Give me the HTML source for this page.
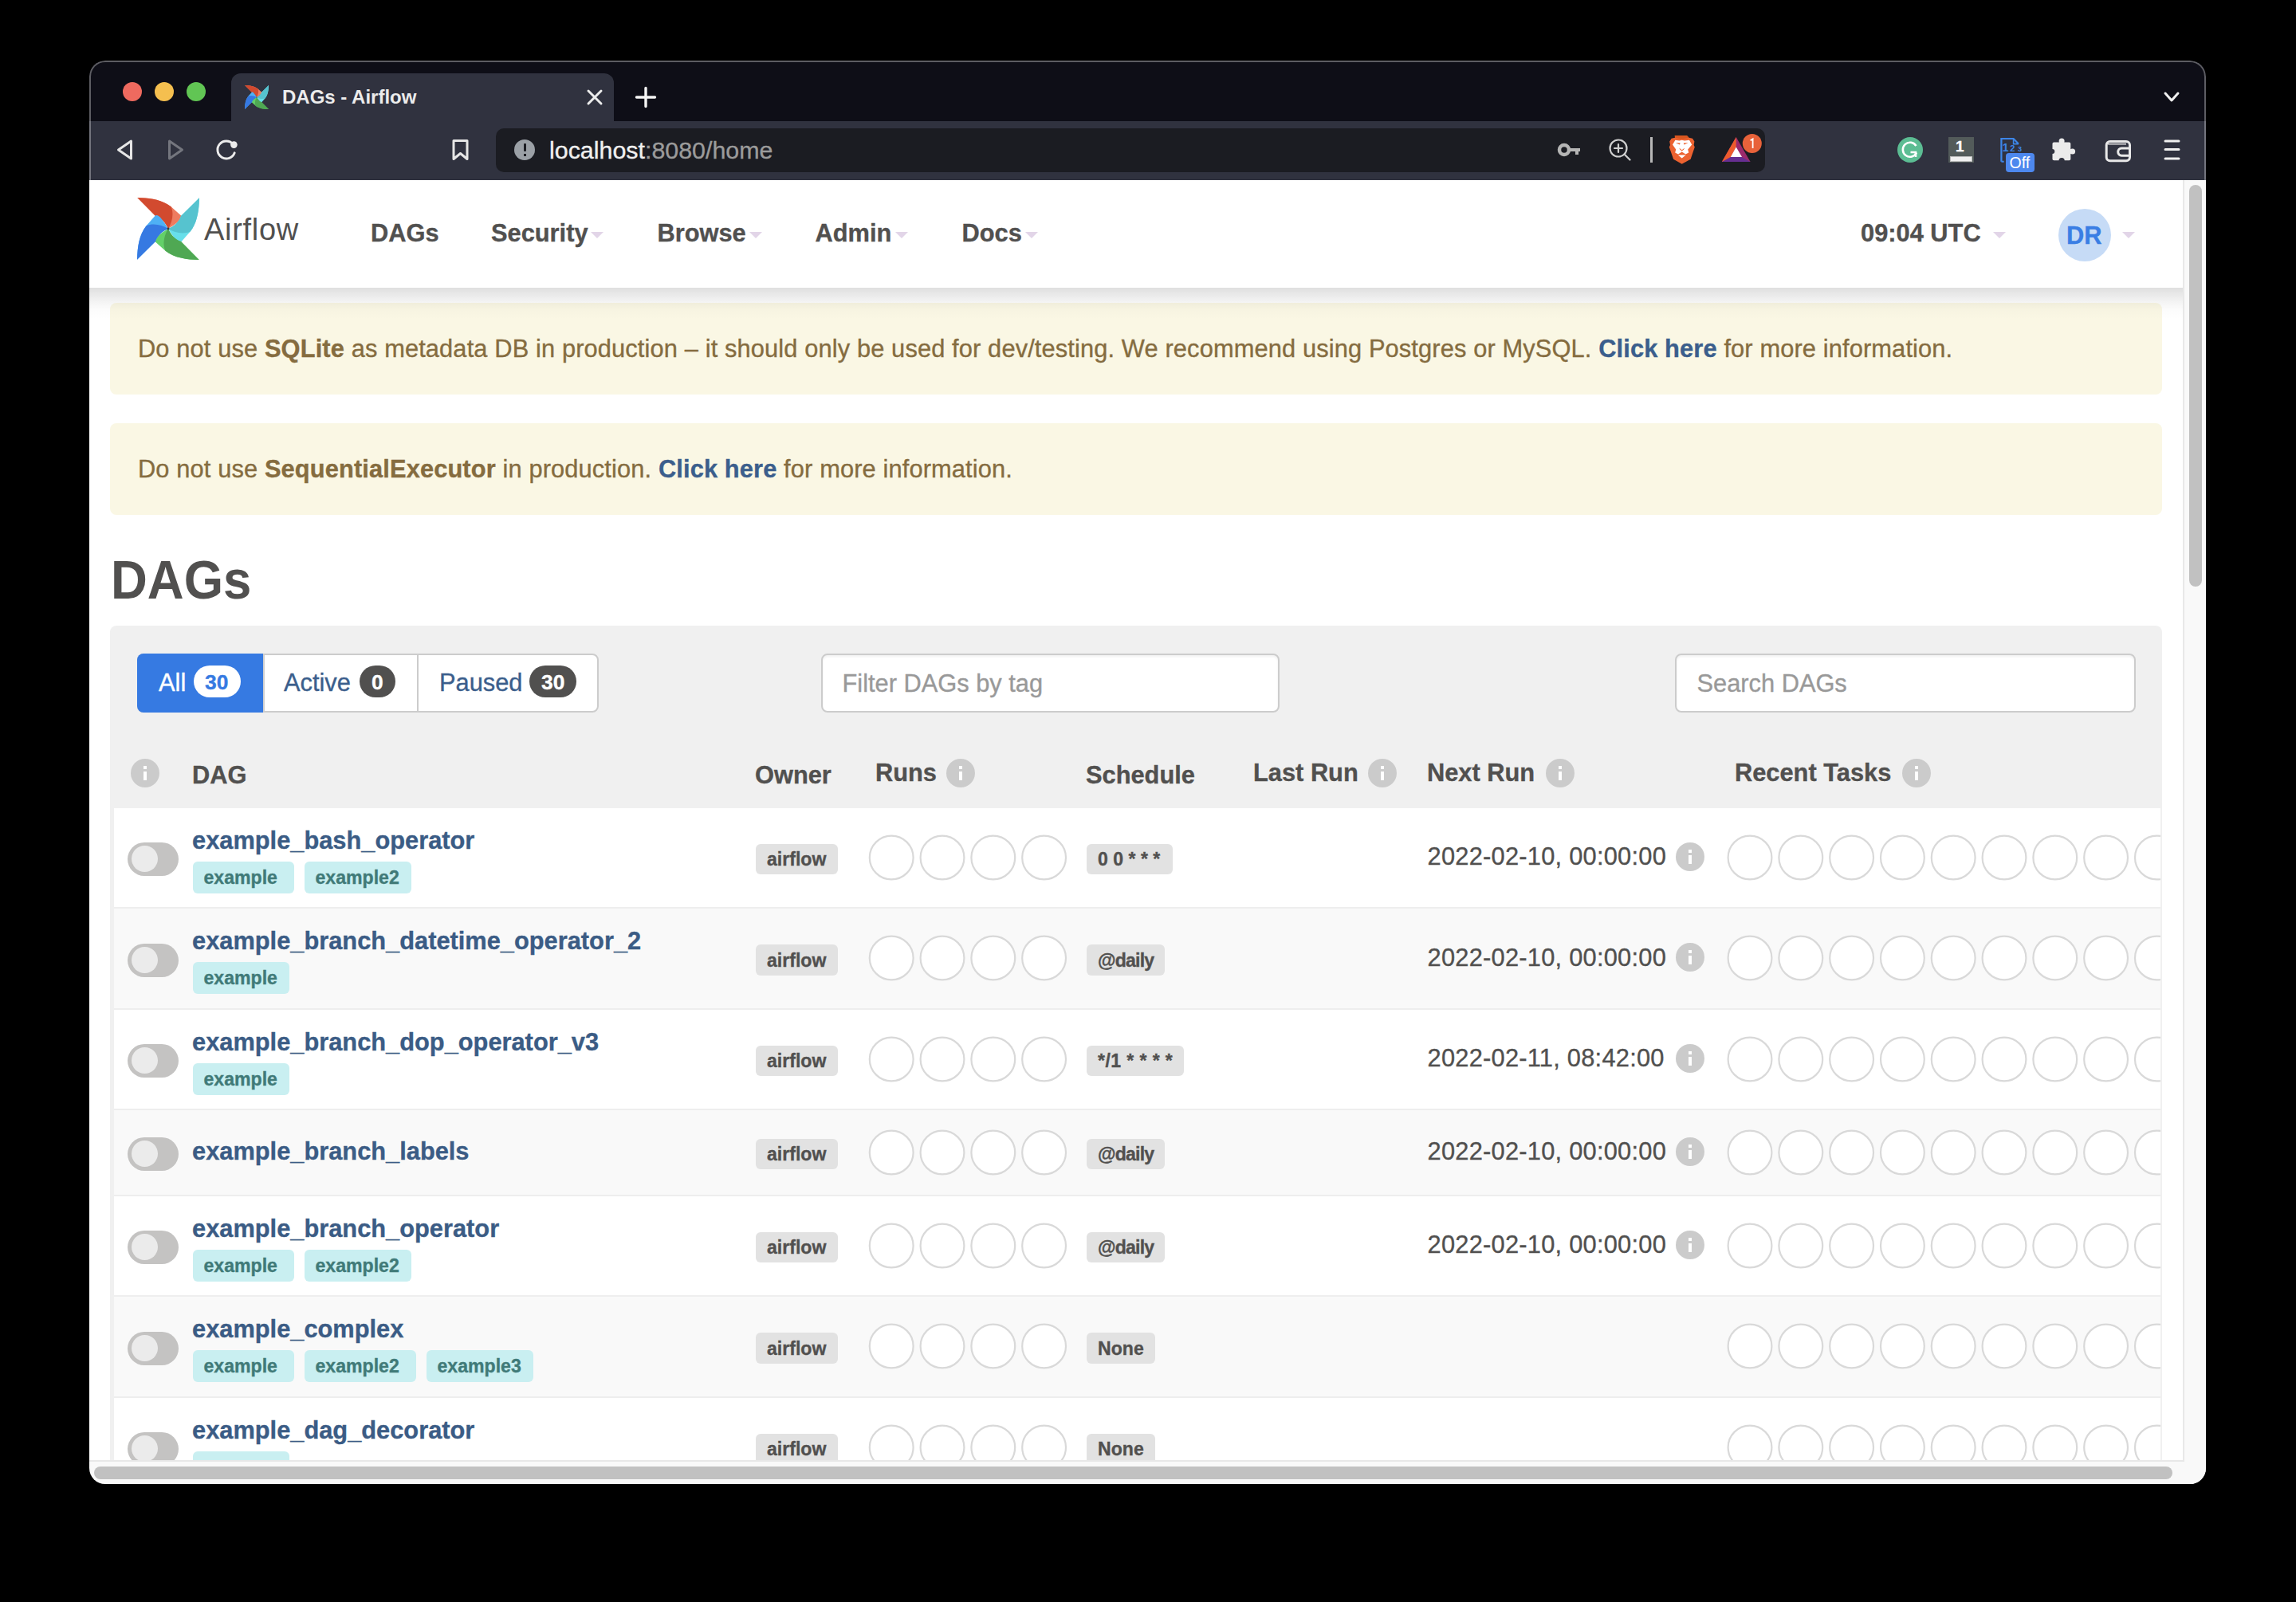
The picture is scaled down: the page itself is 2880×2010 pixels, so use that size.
<!DOCTYPE html>
<html><head><meta charset="utf-8">
<style>
html,body{margin:0;padding:0;width:2880px;height:2010px;overflow:hidden;background:#000;}
*{box-sizing:border-box;}
body{font-family:"Liberation Sans",sans-serif;position:relative;}
.a{position:absolute;}
.t{position:absolute;line-height:1;white-space:nowrap;-webkit-text-stroke:0.35px;}
.t b{font-weight:700;}
.t a{font-weight:700;color:#3b5e8c;text-decoration:none;}
#win{position:absolute;left:0;top:0;width:2880px;height:2010px;clip-path:inset(76px 113px 148px 112px round 20px);}
#page{position:absolute;left:0;top:0;width:2880px;height:2010px;clip-path:inset(226px 142px 178px 112px);}
.caret{position:absolute;width:0;height:0;border-left:8px solid transparent;border-right:8px solid transparent;border-top:8px solid #e2d5e8;}
.info{position:absolute;width:36px;height:36px;border-radius:18px;background:#cbcbcb;}
.info:before{content:"";position:absolute;left:16px;top:9px;width:4px;height:4px;background:#fff;}
.info:after{content:"";position:absolute;left:16px;top:16px;width:4px;height:11px;background:#fff;}
.tog{position:absolute;width:64px;height:42px;border-radius:21px;background:#c4c3c2;}
.tog:after{content:"";position:absolute;left:4.8px;top:3.8px;width:33.4px;height:33.4px;border-radius:17px;background:#ebebeb;}
</style></head><body>
<div id="win">
<div class="a" style="left:112px;top:76px;width:2655px;height:76px;background:#0e0e17;"></div>
<div class="a" style="left:154px;top:103px;width:24px;height:24px;border-radius:12px;background:#ee6a5f;"></div>
<div class="a" style="left:194px;top:103px;width:24px;height:24px;border-radius:12px;background:#f5bf4f;"></div>
<div class="a" style="left:234px;top:103px;width:24px;height:24px;border-radius:12px;background:#61c554;"></div>
<div class="a" style="left:290px;top:92px;width:480px;height:60px;background:#30323f;border-radius:12px 12px 0 0;"></div>
<svg class="a" style="left:307px;top:107px;" width="30" height="30" viewBox="-50 -50 100 100"><g transform="rotate(0)"><path d="M-49.6 -50 C-30 -49.5 -10 -47 4.5 -35.5 L21 -20.8 C22.5 -18.5 21.5 -16 18.5 -13 C12 -7.5 6 -3.5 0 0 C-3.5 -8.5 -11 -18 -20.5 -20.5 Z" fill="#ee7b5f"/><path d="M-49.6 -50 C-30 -49.5 -10 -47 4.5 -35.5 C9.5 -25 6.5 -10 0 0 C-3.5 -8.5 -11 -18 -20.5 -20.5 Z" fill="#d24a2f"/></g><g transform="rotate(90)"><path d="M-49.6 -50 C-30 -49.5 -10 -47 4.5 -35.5 L21 -20.8 C22.5 -18.5 21.5 -16 18.5 -13 C12 -7.5 6 -3.5 0 0 C-3.5 -8.5 -11 -18 -20.5 -20.5 Z" fill="#67dfea"/><path d="M-49.6 -50 C-30 -49.5 -10 -47 4.5 -35.5 C9.5 -25 6.5 -10 0 0 C-3.5 -8.5 -11 -18 -20.5 -20.5 Z" fill="#56c3cf"/></g><g transform="rotate(180)"><path d="M-49.6 -50 C-30 -49.5 -10 -47 4.5 -35.5 L21 -20.8 C22.5 -18.5 21.5 -16 18.5 -13 C12 -7.5 6 -3.5 0 0 C-3.5 -8.5 -11 -18 -20.5 -20.5 Z" fill="#63d069"/><path d="M-49.6 -50 C-30 -49.5 -10 -47 4.5 -35.5 C9.5 -25 6.5 -10 0 0 C-3.5 -8.5 -11 -18 -20.5 -20.5 Z" fill="#4fa853"/></g><g transform="rotate(270)"><path d="M-49.6 -50 C-30 -49.5 -10 -47 4.5 -35.5 L21 -20.8 C22.5 -18.5 21.5 -16 18.5 -13 C12 -7.5 6 -3.5 0 0 C-3.5 -8.5 -11 -18 -20.5 -20.5 Z" fill="#4fb0f5"/><path d="M-49.6 -50 C-30 -49.5 -10 -47 4.5 -35.5 C9.5 -25 6.5 -10 0 0 C-3.5 -8.5 -11 -18 -20.5 -20.5 Z" fill="#3679e2"/></g><circle cx="0" cy="0" r="1.8" fill="#3a3a3a"/></svg>

<div class="t" style="left:354px;top:110px;font-size:24px;font-weight:700;color:#ececec;-webkit-text-stroke:0;">DAGs - Airflow</div>
<svg class="a" style="left:730px;top:106px;" width="32" height="32"><path d="M8 8 L24 24 M24 8 L8 24" stroke="#ececec" stroke-width="3" stroke-linecap="round"/></svg>
<svg class="a" style="left:794px;top:106px;" width="32" height="32"><path d="M16 4.5 V27.5 M4.5 16 H27.5" stroke="#f5f5f5" stroke-width="3.4" stroke-linecap="round"/></svg>
<svg class="a" style="left:2708px;top:108px;" width="32" height="28"><path d="M8 9 L16 18 L24 9" fill="none" stroke="#f0f0f0" stroke-width="3" stroke-linecap="round" stroke-linejoin="round"/></svg>
<div class="a" style="left:112px;top:152px;width:2655px;height:74px;background:#30323f;"></div>
<svg class="a" style="left:140px;top:170px;" width="36" height="36"><path d="M24.5 7 L8.5 18 L24.5 29 Z" fill="none" stroke="#e6e6e6" stroke-width="3" stroke-linejoin="round"/></svg>
<svg class="a" style="left:204px;top:170px;" width="36" height="36"><path d="M8.5 7 L24.5 18 L8.5 29 Z" fill="none" stroke="#74767e" stroke-width="3" stroke-linejoin="round"/></svg>
<svg class="a" style="left:266px;top:170px;" width="36" height="36"><path d="M26.3 10.9 A11 11 0 1 0 28.2 21.8" fill="none" stroke="#ececec" stroke-width="2.9" stroke-linecap="round"/><circle cx="27.4" cy="11.6" r="4.3" fill="#ececec"/></svg>
<svg class="a" style="left:560px;top:170px;" width="36" height="36"><path d="M9 6.5 H26 V29.5 L17.5 22.5 L9 29.5 Z" fill="none" stroke="#e6e6e6" stroke-width="3" stroke-linejoin="round"/></svg>
<div class="a" style="left:622px;top:161px;width:1592px;height:55px;background:#1b1c22;border-radius:10px;"></div>
<div class="a" style="left:645px;top:175px;width:26px;height:26px;border-radius:13px;background:#9ba0a6;"></div>
<div class="a" style="left:656.5px;top:180px;width:3px;height:10px;background:#1b1c22;border-radius:1px;"></div>
<div class="a" style="left:656.5px;top:193px;width:3px;height:3px;background:#1b1c22;"></div>
<div class="t" style="left:689px;top:172.5px;font-size:30.4px;color:#f0f0f0;">localhost<span style="color:#9b9b9b">:8080/home</span></div>
<svg class="a" style="left:1950px;top:170px;" width="36" height="36"><circle cx="12" cy="18" r="6" fill="none" stroke="#b5b5b5" stroke-width="4.5"/><path d="M17 16 H32 V20 H30 V24 H26 V20 H17 Z" fill="#b5b5b5"/></svg>
<svg class="a" style="left:2014px;top:170px;" width="36" height="36"><circle cx="16" cy="16" r="10.5" fill="none" stroke="#cfcfcf" stroke-width="2.2"/><path d="M16 11 V21 M11 16 H21 M23.5 23.5 L30.5 30.5" stroke="#cfcfcf" stroke-width="2.2" stroke-linecap="round"/></svg>
<div class="a" style="left:2070px;top:172px;width:2.5px;height:32px;background:#b8b8b8;"></div>
<svg class="a" style="left:2088px;top:164px;" width="128" height="48" viewBox="0 0 128 48">
<path d="M12.8 5.9 L27.9 5.9 L30.5 8.8 L35 9.8 L37.4 13.5 L36.6 18 L37.8 20.5 L32.6 35.7 L21.7 41.8 L11.1 35.7 L5.8 20.5 L7 18 L6.2 13.5 L8.6 9.8 L13 8.8 Z" fill="#ec6230"/>
<path d="M12.8 5.9 L27.9 5.9 L30.5 8.8 L21.7 10.5 L13 8.8 Z" fill="#d8561f"/>
<path d="M10 17.5 L13.4 11.8 L18.5 12.6 L21.7 11.8 L25 12.6 L31 11.8 L34.2 17.6 L29.2 23.6 L30.2 27.6 L26.4 29.6 L21.7 26.6 L17 29.6 L13.2 27.6 L14.2 23.6 Z" fill="#fff"/>
<path d="M13.8 15.3 L19.6 15.6 L19 17.4 Z M29.6 15.3 L23.8 15.6 L24.4 17.4 Z M18.2 21.6 L21.7 24.2 L25.2 21.6 L24 23.8 L21.7 25.4 L19.4 23.8 Z" fill="#ec6230"/>
<path d="M16.8 30.4 L26.6 30.4 L21.7 34.4 Z" fill="#fff"/>
<path d="M89.7 8.1 L107.6 39 L71.9 39 Z" fill="#9c2a6c"/>
<path d="M89.7 8.1 L89.7 20.6 L82.8 32.9 L77 39 L71.9 39 Z" fill="#ee5b2c"/>
<path d="M71.9 39 L82.8 32.9 L97 32.9 L107.6 39 Z" fill="#662e91"/>
<path d="M89.7 20.6 L97 32.9 L82.8 32.9 Z" fill="#ffffff"/>
<circle cx="109.8" cy="15.9" r="12" fill="#e8623a"/>
<path d="M107.6 12.2 L110.6 10.4 V22" fill="none" stroke="#fff" stroke-width="1.8"/>
</svg>
<svg class="a" style="left:2378px;top:170px;" width="36" height="36"><circle cx="18" cy="18" r="16" fill="#5cbd93"/><path d="M25.5 13 A9 9 0 1 0 26 21.5" fill="none" stroke="#fff" stroke-width="2.6"/><path d="M18.5 21 H25 V27" fill="none" stroke="#fff" stroke-width="2.6"/></svg>
<div class="a" style="left:2444px;top:172px;width:32px;height:32px;background:#535b5a;"></div>
<div class="a" style="left:2446px;top:195.5px;width:28px;height:7px;background:#f0f0f0;border:1px solid #bbb;"></div>
<div class="t" style="left:2453px;top:174px;font-size:19px;font-weight:700;color:#fff;">1</div>
<svg class="a" style="left:2500px;top:164px;" width="60" height="56" viewBox="0 0 60 56">
<path d="M10.4 38.7 V10 H25.6 L31.9 16.6" fill="none" stroke="#3d86e8" stroke-width="2.2"/>
<path d="M10.4 38.7 H13.7" fill="none" stroke="#3d86e8" stroke-width="2"/>
<path d="M25.6 10 V16.6 H31.9" fill="none" stroke="#3d86e8" stroke-width="1.6"/>
<text x="11.8" y="25.7" font-family="Liberation Sans" font-weight="700" font-size="14" fill="#3d86e8">1</text>
<text x="21.2" y="25.7" font-family="Liberation Sans" font-weight="700" font-size="11" fill="#3d86e8">2</text>
<text x="31" y="25.7" font-family="Liberation Sans" font-weight="700" font-size="9" fill="#3d86e8">3</text>
</svg>
<div class="a" style="left:2516px;top:192px;width:36px;height:24px;border-radius:4px;background:#4d88ee;"></div>
<div class="t" style="left:2520.5px;top:195px;font-size:19.5px;color:#fff;-webkit-text-stroke:0;">Off</div>
<svg class="a" style="left:2570px;top:170px;" width="40" height="36" viewBox="0 0 40 36">
<rect x="4.5" y="8.6" width="22.8" height="22.7" rx="1.8" fill="#ebebeb"/>
<rect x="13.4" y="6" width="5.4" height="4" fill="#ebebeb"/>
<circle cx="16.1" cy="6.9" r="3.5" fill="#ebebeb"/>
<rect x="26" y="17.3" width="3" height="5.4" fill="#ebebeb"/>
<circle cx="29.6" cy="20" r="3.5" fill="#ebebeb"/>
<circle cx="4.3" cy="20" r="3" fill="#30323f"/>
<circle cx="16.1" cy="31.6" r="3.6" fill="#30323f"/>
</svg>
<svg class="a" style="left:2636px;top:170px;" width="40" height="36" viewBox="0 0 40 36">
<rect x="6.2" y="7.5" width="29.3" height="24.3" rx="4.5" fill="none" stroke="#e8e8e8" stroke-width="3"/>
<path d="M8 10.7 H31" stroke="#e8e8e8" stroke-width="1.4"/>
<path d="M35.6 16 H25.3 A4.6 4.6 0 0 0 25.3 25.2 H35.6" fill="none" stroke="#e8e8e8" stroke-width="3"/>
</svg>
<svg class="a" style="left:2710px;top:170px;" width="28" height="34"><path d="M6 7 H23 M6 17.5 H23 M6 29 H23" stroke="#f0f0f0" stroke-width="3" stroke-linecap="round"/></svg>
<div class="a" style="left:112px;top:76px;width:2655px;height:150px;border:2px solid rgba(255,255,255,0.33);border-bottom:none;border-radius:20px 20px 0 0;"></div>
<div class="a" style="left:112px;top:226px;width:2626px;height:1606px;background:#fff;"></div>
<div id="page">
<svg class="a" style="left:171.5px;top:248px;" width="78" height="78" viewBox="-50 -50 100 100"><g transform="rotate(0)"><path d="M-49.6 -50 C-30 -49.5 -10 -47 4.5 -35.5 L21 -20.8 C22.5 -18.5 21.5 -16 18.5 -13 C12 -7.5 6 -3.5 0 0 C-3.5 -8.5 -11 -18 -20.5 -20.5 Z" fill="#ee7b5f"/><path d="M-49.6 -50 C-30 -49.5 -10 -47 4.5 -35.5 C9.5 -25 6.5 -10 0 0 C-3.5 -8.5 -11 -18 -20.5 -20.5 Z" fill="#d24a2f"/></g><g transform="rotate(90)"><path d="M-49.6 -50 C-30 -49.5 -10 -47 4.5 -35.5 L21 -20.8 C22.5 -18.5 21.5 -16 18.5 -13 C12 -7.5 6 -3.5 0 0 C-3.5 -8.5 -11 -18 -20.5 -20.5 Z" fill="#67dfea"/><path d="M-49.6 -50 C-30 -49.5 -10 -47 4.5 -35.5 C9.5 -25 6.5 -10 0 0 C-3.5 -8.5 -11 -18 -20.5 -20.5 Z" fill="#56c3cf"/></g><g transform="rotate(180)"><path d="M-49.6 -50 C-30 -49.5 -10 -47 4.5 -35.5 L21 -20.8 C22.5 -18.5 21.5 -16 18.5 -13 C12 -7.5 6 -3.5 0 0 C-3.5 -8.5 -11 -18 -20.5 -20.5 Z" fill="#63d069"/><path d="M-49.6 -50 C-30 -49.5 -10 -47 4.5 -35.5 C9.5 -25 6.5 -10 0 0 C-3.5 -8.5 -11 -18 -20.5 -20.5 Z" fill="#4fa853"/></g><g transform="rotate(270)"><path d="M-49.6 -50 C-30 -49.5 -10 -47 4.5 -35.5 L21 -20.8 C22.5 -18.5 21.5 -16 18.5 -13 C12 -7.5 6 -3.5 0 0 C-3.5 -8.5 -11 -18 -20.5 -20.5 Z" fill="#4fb0f5"/><path d="M-49.6 -50 C-30 -49.5 -10 -47 4.5 -35.5 C9.5 -25 6.5 -10 0 0 C-3.5 -8.5 -11 -18 -20.5 -20.5 Z" fill="#3679e2"/></g><circle cx="0" cy="0" r="1.8" fill="#3a3a3a"/></svg>
<div class="t" style="left:256.00px;top:269.43px;font-size:38px;font-weight:400;color:#51504f;letter-spacing:0.7px;-webkit-text-stroke:0;">Airflow</div>
<div class="t" style="left:465.00px;top:277.63px;font-size:30.8px;font-weight:700;color:#51504f;">DAGs</div>
<div class="t" style="left:616.00px;top:277.63px;font-size:30.8px;font-weight:700;color:#51504f;">Security</div>
<div class="caret" style="left:741px;top:291px;"></div>
<div class="t" style="left:824.50px;top:277.63px;font-size:30.8px;font-weight:700;color:#51504f;">Browse</div>
<div class="caret" style="left:940px;top:291px;"></div>
<div class="t" style="left:1022.50px;top:277.63px;font-size:30.8px;font-weight:700;color:#51504f;">Admin</div>
<div class="caret" style="left:1122.5px;top:291px;"></div>
<div class="t" style="left:1206.50px;top:277.63px;font-size:30.8px;font-weight:700;color:#51504f;">Docs</div>
<div class="caret" style="left:1286px;top:291px;"></div>
<div class="t" style="left:2334.00px;top:277.63px;font-size:30.8px;font-weight:700;color:#51504f;">09:04 UTC</div>
<div class="caret" style="left:2499.5px;top:291px;"></div>
<div class="a" style="left:2582px;top:262px;width:66px;height:66px;border-radius:33px;background:#c6dbf6;"></div>
<div class="t" style="left:2592.00px;top:280.63px;font-size:30.8px;font-weight:700;color:#3a7ee4;">DR</div>
<div class="caret" style="left:2662px;top:291px;"></div>
<div class="a" style="left:138px;top:380px;width:2574px;height:115px;background:#faf7e4;border-radius:8px;"></div>
<div class="t" style="left:173.00px;top:423.13px;font-size:30.8px;font-weight:400;color:#856c3f;letter-spacing:0.13px;">Do not use <b>SQLite</b> as metadata DB in production – it should only be used for dev/testing. We recommend using Postgres or MySQL. <a>Click here</a> for more information.</div>
<div class="a" style="left:138px;top:531px;width:2574px;height:115px;background:#faf7e4;border-radius:8px;"></div>
<div class="t" style="left:173.00px;top:574.13px;font-size:30.8px;font-weight:400;color:#856c3f;letter-spacing:0.13px;">Do not use <b>SequentialExecutor</b> in production. <a>Click here</a> for more information.</div>
<div class="a" style="left:112px;top:361px;width:2626px;height:40px;background:linear-gradient(rgba(0,0,0,0.125) 0px,rgba(0,0,0,0.04) 19px,rgba(0,0,0,0.012) 28px,rgba(0,0,0,0) 40px);"></div>
<div class="t" style="left:139.00px;top:693.71px;font-size:68.5px;font-weight:700;color:#51504f;-webkit-text-stroke:0;transform:scaleX(0.927);transform-origin:0 0;">DAGs</div>
<div class="a" style="left:138px;top:785px;width:2574px;height:1200px;background:#f0f0f0;border-radius:8px;"></div>
<div class="a" style="left:171.5px;top:820px;width:579px;height:74px;background:#fff;border:2px solid #cccccc;border-radius:8px;"></div>
<div class="a" style="left:171.5px;top:820px;width:158px;height:74px;background:#367ae2;border-radius:8px 0 0 8px;"></div>
<div class="a" style="left:329.5px;top:822px;width:2px;height:70px;background:#d0d0d0;"></div>
<div class="a" style="left:523px;top:822px;width:2px;height:70px;background:#cccccc;"></div>
<div class="t" style="left:199.00px;top:841.63px;font-size:30.8px;font-weight:400;color:#ffffff;">All</div>
<div class="a" style="left:242.5px;top:835px;width:59px;height:40px;background:#fff;border-radius:20px;"></div>
<div class="t" style="left:257.00px;top:842.85px;font-size:26.4px;font-weight:700;color:#367ae2;">30</div>
<div class="t" style="left:356.00px;top:841.63px;font-size:30.8px;font-weight:400;color:#3b5e8c;">Active</div>
<div class="a" style="left:451px;top:835px;width:45px;height:40px;background:#51504f;border-radius:20px;"></div>
<div class="t" style="left:466.00px;top:842.85px;font-size:26.4px;font-weight:700;color:#ffffff;">0</div>
<div class="t" style="left:551.00px;top:841.63px;font-size:30.8px;font-weight:400;color:#3b5e8c;">Paused</div>
<div class="a" style="left:664px;top:835px;width:59px;height:40px;background:#51504f;border-radius:20px;"></div>
<div class="t" style="left:679.00px;top:842.85px;font-size:26.4px;font-weight:700;color:#ffffff;">30</div>
<div class="a" style="left:1030px;top:820px;width:575px;height:74px;background:#fff;border:2px solid #cccccc;border-radius:8px;box-shadow:inset 0 2px 3px rgba(0,0,0,0.06);"></div>
<div class="t" style="left:1056.50px;top:843.13px;font-size:30.8px;font-weight:400;color:#999999;">Filter DAGs by tag</div>
<div class="a" style="left:2101px;top:820px;width:578px;height:74px;background:#fff;border:2px solid #cccccc;border-radius:8px;box-shadow:inset 0 2px 3px rgba(0,0,0,0.06);"></div>
<div class="t" style="left:2128.50px;top:843.13px;font-size:30.8px;font-weight:400;color:#999999;">Search DAGs</div>
<div class="info" style="left:164px;top:952px;"></div>
<div class="t" style="left:241.00px;top:957.63px;font-size:30.8px;font-weight:700;color:#51504f;">DAG</div>
<div class="t" style="left:947.00px;top:957.63px;font-size:30.8px;font-weight:700;color:#51504f;">Owner</div>
<div class="t" style="left:1098.00px;top:955.13px;font-size:30.8px;font-weight:700;color:#51504f;">Runs</div>
<div class="info" style="left:1187px;top:952px;"></div>
<div class="t" style="left:1362.00px;top:957.63px;font-size:30.8px;font-weight:700;color:#51504f;">Schedule</div>
<div class="t" style="left:1572.00px;top:955.13px;font-size:30.8px;font-weight:700;color:#51504f;">Last Run</div>
<div class="info" style="left:1716px;top:952px;"></div>
<div class="t" style="left:1790.00px;top:955.13px;font-size:30.8px;font-weight:700;color:#51504f;">Next Run</div>
<div class="info" style="left:1939px;top:952px;"></div>
<div class="t" style="left:2176.00px;top:955.13px;font-size:30.8px;font-weight:700;color:#51504f;">Recent Tasks</div>
<div class="info" style="left:2386px;top:952px;"></div>
<div class="a" style="left:143px;top:1014px;width:2567px;height:124px;background:#ffffff;"></div>
<div class="a" style="left:143px;top:1138px;width:2567px;height:2px;background:#eeeeee;"></div>
<div class="tog" style="left:160px;top:1057.25px;"></div>
<div class="t" style="left:241.00px;top:1039.63px;font-size:30.8px;font-weight:700;color:#3b5c85;">example_bash_operator</div>
<div class="a" style="left:242px;top:1081px;width:127px;height:40px;background:#c9eff1;border-radius:6px;"></div>
<div class="t" style="left:255.50px;top:1090.15px;font-size:23.1px;font-weight:700;color:#407a78;">example</div>
<div class="a" style="left:382px;top:1081px;width:134px;height:40px;background:#c9eff1;border-radius:6px;"></div>
<div class="t" style="left:395.50px;top:1090.15px;font-size:23.1px;font-weight:700;color:#407a78;">example2</div>
<div class="a" style="left:948px;top:1058.5px;width:102.5px;height:38.5px;background:#e2e2e2;border-radius:6px;"></div>
<div class="t" style="left:962.00px;top:1067.15px;font-size:23.1px;font-weight:700;color:#51504f;">airflow</div>
<div class="a" style="left:1363px;top:1058.5px;width:108px;height:38.5px;background:#e2e2e2;border-radius:6px;"></div>
<div class="t" style="left:1377.00px;top:1067.15px;font-size:23.1px;font-weight:700;color:#51504f;letter-spacing:0px;">0 0 * * *</div>
<svg class="a" style="left:1080px;top:1035.75px;" width="270" height="80"><circle cx="38.20" cy="40" r="27.4" fill="#fff" stroke="#d9d9d9" stroke-width="2.2"/><circle cx="102.00" cy="40" r="27.4" fill="#fff" stroke="#d9d9d9" stroke-width="2.2"/><circle cx="165.80" cy="40" r="27.4" fill="#fff" stroke="#d9d9d9" stroke-width="2.2"/><circle cx="229.60" cy="40" r="27.4" fill="#fff" stroke="#d9d9d9" stroke-width="2.2"/></svg>
<div class="t" style="left:1790.50px;top:1060.38px;font-size:30.8px;font-weight:400;color:#51504f;letter-spacing:0.25px;">2022-02-10, 00:00:00</div>
<div class="info" style="left:2102px;top:1057px;"></div>
<svg class="a" style="left:2150px;top:1035.75px;" width="560" height="80"><circle cx="45.00" cy="40" r="27.4" fill="#fff" stroke="#d9d9d9" stroke-width="2.2"/><circle cx="108.80" cy="40" r="27.4" fill="#fff" stroke="#d9d9d9" stroke-width="2.2"/><circle cx="172.60" cy="40" r="27.4" fill="#fff" stroke="#d9d9d9" stroke-width="2.2"/><circle cx="236.40" cy="40" r="27.4" fill="#fff" stroke="#d9d9d9" stroke-width="2.2"/><circle cx="300.20" cy="40" r="27.4" fill="#fff" stroke="#d9d9d9" stroke-width="2.2"/><circle cx="364.00" cy="40" r="27.4" fill="#fff" stroke="#d9d9d9" stroke-width="2.2"/><circle cx="427.80" cy="40" r="27.4" fill="#fff" stroke="#d9d9d9" stroke-width="2.2"/><circle cx="491.60" cy="40" r="27.4" fill="#fff" stroke="#d9d9d9" stroke-width="2.2"/><circle cx="555.40" cy="40" r="27.4" fill="#fff" stroke="#d9d9d9" stroke-width="2.2"/></svg>
<div class="a" style="left:143px;top:1140px;width:2567px;height:125px;background:#f9f9f9;"></div>
<div class="a" style="left:143px;top:1265px;width:2567px;height:2px;background:#eeeeee;"></div>
<div class="tog" style="left:160px;top:1183.75px;"></div>
<div class="t" style="left:241.00px;top:1165.63px;font-size:30.8px;font-weight:700;color:#3b5c85;">example_branch_datetime_operator_2</div>
<div class="a" style="left:242px;top:1207px;width:121px;height:40px;background:#c9eff1;border-radius:6px;"></div>
<div class="t" style="left:255.50px;top:1216.15px;font-size:23.1px;font-weight:700;color:#407a78;">example</div>
<div class="a" style="left:948px;top:1185.0px;width:102.5px;height:38.5px;background:#e2e2e2;border-radius:6px;"></div>
<div class="t" style="left:962.00px;top:1193.65px;font-size:23.1px;font-weight:700;color:#51504f;">airflow</div>
<div class="a" style="left:1363px;top:1185.0px;width:98px;height:38.5px;background:#e2e2e2;border-radius:6px;"></div>
<div class="t" style="left:1377.00px;top:1193.65px;font-size:23.1px;font-weight:700;color:#51504f;letter-spacing:-0.8px;">@daily</div>
<svg class="a" style="left:1080px;top:1162.25px;" width="270" height="80"><circle cx="38.20" cy="40" r="27.4" fill="#fff" stroke="#d9d9d9" stroke-width="2.2"/><circle cx="102.00" cy="40" r="27.4" fill="#fff" stroke="#d9d9d9" stroke-width="2.2"/><circle cx="165.80" cy="40" r="27.4" fill="#fff" stroke="#d9d9d9" stroke-width="2.2"/><circle cx="229.60" cy="40" r="27.4" fill="#fff" stroke="#d9d9d9" stroke-width="2.2"/></svg>
<div class="t" style="left:1790.50px;top:1186.88px;font-size:30.8px;font-weight:400;color:#51504f;letter-spacing:0.25px;">2022-02-10, 00:00:00</div>
<div class="info" style="left:2102px;top:1183px;"></div>
<svg class="a" style="left:2150px;top:1162.25px;" width="560" height="80"><circle cx="45.00" cy="40" r="27.4" fill="#fff" stroke="#d9d9d9" stroke-width="2.2"/><circle cx="108.80" cy="40" r="27.4" fill="#fff" stroke="#d9d9d9" stroke-width="2.2"/><circle cx="172.60" cy="40" r="27.4" fill="#fff" stroke="#d9d9d9" stroke-width="2.2"/><circle cx="236.40" cy="40" r="27.4" fill="#fff" stroke="#d9d9d9" stroke-width="2.2"/><circle cx="300.20" cy="40" r="27.4" fill="#fff" stroke="#d9d9d9" stroke-width="2.2"/><circle cx="364.00" cy="40" r="27.4" fill="#fff" stroke="#d9d9d9" stroke-width="2.2"/><circle cx="427.80" cy="40" r="27.4" fill="#fff" stroke="#d9d9d9" stroke-width="2.2"/><circle cx="491.60" cy="40" r="27.4" fill="#fff" stroke="#d9d9d9" stroke-width="2.2"/><circle cx="555.40" cy="40" r="27.4" fill="#fff" stroke="#d9d9d9" stroke-width="2.2"/></svg>
<div class="a" style="left:143px;top:1267px;width:2567px;height:124px;background:#ffffff;"></div>
<div class="a" style="left:143px;top:1391px;width:2567px;height:2px;background:#eeeeee;"></div>
<div class="tog" style="left:160px;top:1310.25px;"></div>
<div class="t" style="left:241.00px;top:1292.63px;font-size:30.8px;font-weight:700;color:#3b5c85;">example_branch_dop_operator_v3</div>
<div class="a" style="left:242px;top:1334px;width:121px;height:40px;background:#c9eff1;border-radius:6px;"></div>
<div class="t" style="left:255.50px;top:1343.15px;font-size:23.1px;font-weight:700;color:#407a78;">example</div>
<div class="a" style="left:948px;top:1311.5px;width:102.5px;height:38.5px;background:#e2e2e2;border-radius:6px;"></div>
<div class="t" style="left:962.00px;top:1320.15px;font-size:23.1px;font-weight:700;color:#51504f;">airflow</div>
<div class="a" style="left:1363px;top:1311.5px;width:122px;height:38.5px;background:#e2e2e2;border-radius:6px;"></div>
<div class="t" style="left:1377.00px;top:1320.15px;font-size:23.1px;font-weight:700;color:#51504f;letter-spacing:0.4px;">*/1 * * * *</div>
<svg class="a" style="left:1080px;top:1288.75px;" width="270" height="80"><circle cx="38.20" cy="40" r="27.4" fill="#fff" stroke="#d9d9d9" stroke-width="2.2"/><circle cx="102.00" cy="40" r="27.4" fill="#fff" stroke="#d9d9d9" stroke-width="2.2"/><circle cx="165.80" cy="40" r="27.4" fill="#fff" stroke="#d9d9d9" stroke-width="2.2"/><circle cx="229.60" cy="40" r="27.4" fill="#fff" stroke="#d9d9d9" stroke-width="2.2"/></svg>
<div class="t" style="left:1790.50px;top:1313.38px;font-size:30.8px;font-weight:400;color:#51504f;letter-spacing:0.25px;">2022-02-11, 08:42:00</div>
<div class="info" style="left:2102px;top:1310px;"></div>
<svg class="a" style="left:2150px;top:1288.75px;" width="560" height="80"><circle cx="45.00" cy="40" r="27.4" fill="#fff" stroke="#d9d9d9" stroke-width="2.2"/><circle cx="108.80" cy="40" r="27.4" fill="#fff" stroke="#d9d9d9" stroke-width="2.2"/><circle cx="172.60" cy="40" r="27.4" fill="#fff" stroke="#d9d9d9" stroke-width="2.2"/><circle cx="236.40" cy="40" r="27.4" fill="#fff" stroke="#d9d9d9" stroke-width="2.2"/><circle cx="300.20" cy="40" r="27.4" fill="#fff" stroke="#d9d9d9" stroke-width="2.2"/><circle cx="364.00" cy="40" r="27.4" fill="#fff" stroke="#d9d9d9" stroke-width="2.2"/><circle cx="427.80" cy="40" r="27.4" fill="#fff" stroke="#d9d9d9" stroke-width="2.2"/><circle cx="491.60" cy="40" r="27.4" fill="#fff" stroke="#d9d9d9" stroke-width="2.2"/><circle cx="555.40" cy="40" r="27.4" fill="#fff" stroke="#d9d9d9" stroke-width="2.2"/></svg>
<div class="a" style="left:143px;top:1393px;width:2567px;height:106px;background:#f9f9f9;"></div>
<div class="a" style="left:143px;top:1499px;width:2567px;height:2px;background:#eeeeee;"></div>
<div class="tog" style="left:160px;top:1427.25px;"></div>
<div class="t" style="left:241.00px;top:1429.88px;font-size:30.8px;font-weight:700;color:#3b5c85;">example_branch_labels</div>
<div class="a" style="left:948px;top:1428.5px;width:102.5px;height:38.5px;background:#e2e2e2;border-radius:6px;"></div>
<div class="t" style="left:962.00px;top:1437.15px;font-size:23.1px;font-weight:700;color:#51504f;">airflow</div>
<div class="a" style="left:1363px;top:1428.5px;width:98px;height:38.5px;background:#e2e2e2;border-radius:6px;"></div>
<div class="t" style="left:1377.00px;top:1437.15px;font-size:23.1px;font-weight:700;color:#51504f;letter-spacing:-0.8px;">@daily</div>
<svg class="a" style="left:1080px;top:1405.75px;" width="270" height="80"><circle cx="38.20" cy="40" r="27.4" fill="#fff" stroke="#d9d9d9" stroke-width="2.2"/><circle cx="102.00" cy="40" r="27.4" fill="#fff" stroke="#d9d9d9" stroke-width="2.2"/><circle cx="165.80" cy="40" r="27.4" fill="#fff" stroke="#d9d9d9" stroke-width="2.2"/><circle cx="229.60" cy="40" r="27.4" fill="#fff" stroke="#d9d9d9" stroke-width="2.2"/></svg>
<div class="t" style="left:1790.50px;top:1430.38px;font-size:30.8px;font-weight:400;color:#51504f;letter-spacing:0.25px;">2022-02-10, 00:00:00</div>
<div class="info" style="left:2102px;top:1427px;"></div>
<svg class="a" style="left:2150px;top:1405.75px;" width="560" height="80"><circle cx="45.00" cy="40" r="27.4" fill="#fff" stroke="#d9d9d9" stroke-width="2.2"/><circle cx="108.80" cy="40" r="27.4" fill="#fff" stroke="#d9d9d9" stroke-width="2.2"/><circle cx="172.60" cy="40" r="27.4" fill="#fff" stroke="#d9d9d9" stroke-width="2.2"/><circle cx="236.40" cy="40" r="27.4" fill="#fff" stroke="#d9d9d9" stroke-width="2.2"/><circle cx="300.20" cy="40" r="27.4" fill="#fff" stroke="#d9d9d9" stroke-width="2.2"/><circle cx="364.00" cy="40" r="27.4" fill="#fff" stroke="#d9d9d9" stroke-width="2.2"/><circle cx="427.80" cy="40" r="27.4" fill="#fff" stroke="#d9d9d9" stroke-width="2.2"/><circle cx="491.60" cy="40" r="27.4" fill="#fff" stroke="#d9d9d9" stroke-width="2.2"/><circle cx="555.40" cy="40" r="27.4" fill="#fff" stroke="#d9d9d9" stroke-width="2.2"/></svg>
<div class="a" style="left:143px;top:1501px;width:2567px;height:124px;background:#ffffff;"></div>
<div class="a" style="left:143px;top:1625px;width:2567px;height:2px;background:#eeeeee;"></div>
<div class="tog" style="left:160px;top:1544.25px;"></div>
<div class="t" style="left:241.00px;top:1526.63px;font-size:30.8px;font-weight:700;color:#3b5c85;">example_branch_operator</div>
<div class="a" style="left:242px;top:1568px;width:127px;height:40px;background:#c9eff1;border-radius:6px;"></div>
<div class="t" style="left:255.50px;top:1577.15px;font-size:23.1px;font-weight:700;color:#407a78;">example</div>
<div class="a" style="left:382px;top:1568px;width:134px;height:40px;background:#c9eff1;border-radius:6px;"></div>
<div class="t" style="left:395.50px;top:1577.15px;font-size:23.1px;font-weight:700;color:#407a78;">example2</div>
<div class="a" style="left:948px;top:1545.5px;width:102.5px;height:38.5px;background:#e2e2e2;border-radius:6px;"></div>
<div class="t" style="left:962.00px;top:1554.15px;font-size:23.1px;font-weight:700;color:#51504f;">airflow</div>
<div class="a" style="left:1363px;top:1545.5px;width:98px;height:38.5px;background:#e2e2e2;border-radius:6px;"></div>
<div class="t" style="left:1377.00px;top:1554.15px;font-size:23.1px;font-weight:700;color:#51504f;letter-spacing:-0.8px;">@daily</div>
<svg class="a" style="left:1080px;top:1522.75px;" width="270" height="80"><circle cx="38.20" cy="40" r="27.4" fill="#fff" stroke="#d9d9d9" stroke-width="2.2"/><circle cx="102.00" cy="40" r="27.4" fill="#fff" stroke="#d9d9d9" stroke-width="2.2"/><circle cx="165.80" cy="40" r="27.4" fill="#fff" stroke="#d9d9d9" stroke-width="2.2"/><circle cx="229.60" cy="40" r="27.4" fill="#fff" stroke="#d9d9d9" stroke-width="2.2"/></svg>
<div class="t" style="left:1790.50px;top:1547.38px;font-size:30.8px;font-weight:400;color:#51504f;letter-spacing:0.25px;">2022-02-10, 00:00:00</div>
<div class="info" style="left:2102px;top:1544px;"></div>
<svg class="a" style="left:2150px;top:1522.75px;" width="560" height="80"><circle cx="45.00" cy="40" r="27.4" fill="#fff" stroke="#d9d9d9" stroke-width="2.2"/><circle cx="108.80" cy="40" r="27.4" fill="#fff" stroke="#d9d9d9" stroke-width="2.2"/><circle cx="172.60" cy="40" r="27.4" fill="#fff" stroke="#d9d9d9" stroke-width="2.2"/><circle cx="236.40" cy="40" r="27.4" fill="#fff" stroke="#d9d9d9" stroke-width="2.2"/><circle cx="300.20" cy="40" r="27.4" fill="#fff" stroke="#d9d9d9" stroke-width="2.2"/><circle cx="364.00" cy="40" r="27.4" fill="#fff" stroke="#d9d9d9" stroke-width="2.2"/><circle cx="427.80" cy="40" r="27.4" fill="#fff" stroke="#d9d9d9" stroke-width="2.2"/><circle cx="491.60" cy="40" r="27.4" fill="#fff" stroke="#d9d9d9" stroke-width="2.2"/><circle cx="555.40" cy="40" r="27.4" fill="#fff" stroke="#d9d9d9" stroke-width="2.2"/></svg>
<div class="a" style="left:143px;top:1627px;width:2567px;height:125px;background:#f9f9f9;"></div>
<div class="a" style="left:143px;top:1752px;width:2567px;height:2px;background:#eeeeee;"></div>
<div class="tog" style="left:160px;top:1670.75px;"></div>
<div class="t" style="left:241.00px;top:1652.63px;font-size:30.8px;font-weight:700;color:#3b5c85;">example_complex</div>
<div class="a" style="left:242px;top:1694px;width:127px;height:40px;background:#c9eff1;border-radius:6px;"></div>
<div class="t" style="left:255.50px;top:1703.15px;font-size:23.1px;font-weight:700;color:#407a78;">example</div>
<div class="a" style="left:382px;top:1694px;width:140px;height:40px;background:#c9eff1;border-radius:6px;"></div>
<div class="t" style="left:395.50px;top:1703.15px;font-size:23.1px;font-weight:700;color:#407a78;">example2</div>
<div class="a" style="left:535px;top:1694px;width:134px;height:40px;background:#c9eff1;border-radius:6px;"></div>
<div class="t" style="left:548.50px;top:1703.15px;font-size:23.1px;font-weight:700;color:#407a78;">example3</div>
<div class="a" style="left:948px;top:1672.0px;width:102.5px;height:38.5px;background:#e2e2e2;border-radius:6px;"></div>
<div class="t" style="left:962.00px;top:1680.65px;font-size:23.1px;font-weight:700;color:#51504f;">airflow</div>
<div class="a" style="left:1363px;top:1672.0px;width:86px;height:38.5px;background:#e2e2e2;border-radius:6px;"></div>
<div class="t" style="left:1377.00px;top:1680.65px;font-size:23.1px;font-weight:700;color:#51504f;letter-spacing:0px;">None</div>
<svg class="a" style="left:1080px;top:1649.25px;" width="270" height="80"><circle cx="38.20" cy="40" r="27.4" fill="#fff" stroke="#d9d9d9" stroke-width="2.2"/><circle cx="102.00" cy="40" r="27.4" fill="#fff" stroke="#d9d9d9" stroke-width="2.2"/><circle cx="165.80" cy="40" r="27.4" fill="#fff" stroke="#d9d9d9" stroke-width="2.2"/><circle cx="229.60" cy="40" r="27.4" fill="#fff" stroke="#d9d9d9" stroke-width="2.2"/></svg>
<svg class="a" style="left:2150px;top:1649.25px;" width="560" height="80"><circle cx="45.00" cy="40" r="27.4" fill="#fff" stroke="#d9d9d9" stroke-width="2.2"/><circle cx="108.80" cy="40" r="27.4" fill="#fff" stroke="#d9d9d9" stroke-width="2.2"/><circle cx="172.60" cy="40" r="27.4" fill="#fff" stroke="#d9d9d9" stroke-width="2.2"/><circle cx="236.40" cy="40" r="27.4" fill="#fff" stroke="#d9d9d9" stroke-width="2.2"/><circle cx="300.20" cy="40" r="27.4" fill="#fff" stroke="#d9d9d9" stroke-width="2.2"/><circle cx="364.00" cy="40" r="27.4" fill="#fff" stroke="#d9d9d9" stroke-width="2.2"/><circle cx="427.80" cy="40" r="27.4" fill="#fff" stroke="#d9d9d9" stroke-width="2.2"/><circle cx="491.60" cy="40" r="27.4" fill="#fff" stroke="#d9d9d9" stroke-width="2.2"/><circle cx="555.40" cy="40" r="27.4" fill="#fff" stroke="#d9d9d9" stroke-width="2.2"/></svg>
<div class="a" style="left:143px;top:1754px;width:2567px;height:124px;background:#ffffff;"></div>
<div class="a" style="left:143px;top:1878px;width:2567px;height:2px;background:#eeeeee;"></div>
<div class="tog" style="left:160px;top:1797.25px;"></div>
<div class="t" style="left:241.00px;top:1779.63px;font-size:30.8px;font-weight:700;color:#3b5c85;">example_dag_decorator</div>
<div class="a" style="left:242px;top:1821px;width:121px;height:40px;background:#c9eff1;border-radius:6px;"></div>
<div class="a" style="left:948px;top:1798.5px;width:102.5px;height:38.5px;background:#e2e2e2;border-radius:6px;"></div>
<div class="t" style="left:962.00px;top:1807.15px;font-size:23.1px;font-weight:700;color:#51504f;">airflow</div>
<div class="a" style="left:1363px;top:1798.5px;width:86px;height:38.5px;background:#e2e2e2;border-radius:6px;"></div>
<div class="t" style="left:1377.00px;top:1807.15px;font-size:23.1px;font-weight:700;color:#51504f;letter-spacing:0px;">None</div>
<svg class="a" style="left:1080px;top:1775.75px;" width="270" height="80"><circle cx="38.20" cy="40" r="27.4" fill="#fff" stroke="#d9d9d9" stroke-width="2.2"/><circle cx="102.00" cy="40" r="27.4" fill="#fff" stroke="#d9d9d9" stroke-width="2.2"/><circle cx="165.80" cy="40" r="27.4" fill="#fff" stroke="#d9d9d9" stroke-width="2.2"/><circle cx="229.60" cy="40" r="27.4" fill="#fff" stroke="#d9d9d9" stroke-width="2.2"/></svg>
<svg class="a" style="left:2150px;top:1775.75px;" width="560" height="80"><circle cx="45.00" cy="40" r="27.4" fill="#fff" stroke="#d9d9d9" stroke-width="2.2"/><circle cx="108.80" cy="40" r="27.4" fill="#fff" stroke="#d9d9d9" stroke-width="2.2"/><circle cx="172.60" cy="40" r="27.4" fill="#fff" stroke="#d9d9d9" stroke-width="2.2"/><circle cx="236.40" cy="40" r="27.4" fill="#fff" stroke="#d9d9d9" stroke-width="2.2"/><circle cx="300.20" cy="40" r="27.4" fill="#fff" stroke="#d9d9d9" stroke-width="2.2"/><circle cx="364.00" cy="40" r="27.4" fill="#fff" stroke="#d9d9d9" stroke-width="2.2"/><circle cx="427.80" cy="40" r="27.4" fill="#fff" stroke="#d9d9d9" stroke-width="2.2"/><circle cx="491.60" cy="40" r="27.4" fill="#fff" stroke="#d9d9d9" stroke-width="2.2"/><circle cx="555.40" cy="40" r="27.4" fill="#fff" stroke="#d9d9d9" stroke-width="2.2"/></svg>
<div class="a" style="left:2710px;top:1014px;width:2px;height:900px;background:#f0f0f0;"></div>
<div class="a" style="left:138px;top:1014px;width:5px;height:900px;background:#f0f0f0;"></div>
</div>
<div class="a" style="left:2738px;top:226px;width:29px;height:1636px;background:#f9f9f9;border-left:2px solid #e8e8e8;"></div>
<div class="a" style="left:2746px;top:232px;width:16px;height:504px;border-radius:8px;background:#c1c1c1;"></div>
<div class="a" style="left:112px;top:1832px;width:2655px;height:30px;background:#f9f9f9;"></div>
<div class="a" style="left:112px;top:1832px;width:2628px;height:2px;background:#e8e8e8;"></div>
<div class="a" style="left:118px;top:1840px;width:2607px;height:16px;border-radius:8px;background:#c1c1c1;"></div>
</div>
</body></html>
